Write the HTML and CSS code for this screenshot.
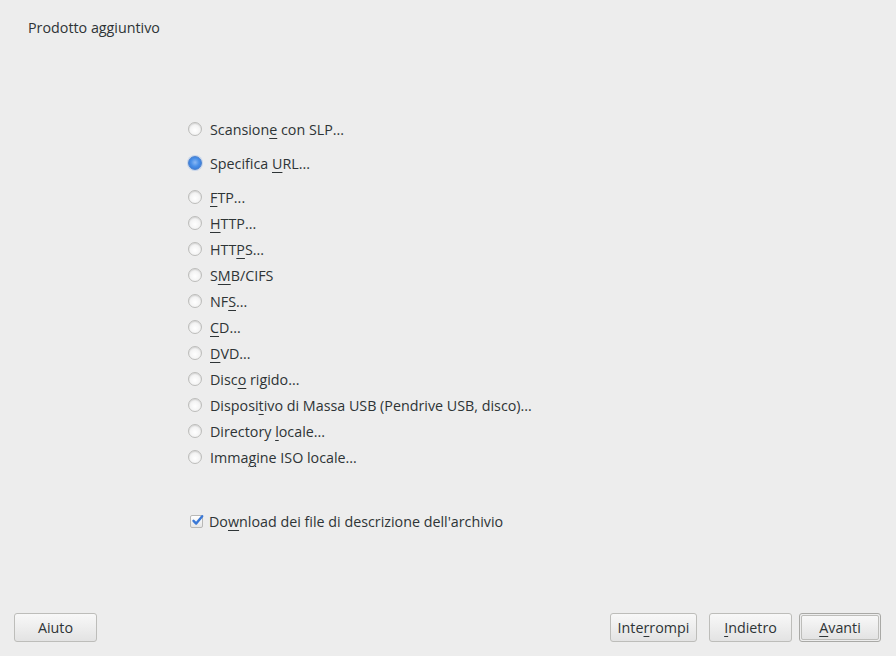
FILE: index.html
```html
<!DOCTYPE html>
<html lang="it">
<head>
<meta charset="utf-8">
<title>Prodotto aggiuntivo</title>
<link rel="stylesheet" href="styles.css">
</head>
<body>
<div class="window">
  <div class="title">Prodotto aggiuntivo</div>
  <div class="content">
    <div class="row gap"><span class="radio"></span><span>Scansion<u>e</u> con SLP...</span></div>
    <div class="row gap"><span class="radio checked"></span><span>Specifica <u>U</u>RL...</span></div>
    <div class="row"><span class="radio"></span><span><u>F</u>TP...</span></div>
    <div class="row"><span class="radio"></span><span><u>H</u>TTP...</span></div>
    <div class="row"><span class="radio"></span><span>HTT<u>P</u>S...</span></div>
    <div class="row"><span class="radio"></span><span>S<u>M</u>B/CIFS</span></div>
    <div class="row"><span class="radio"></span><span>NF<u>S</u>...</span></div>
    <div class="row"><span class="radio"></span><span><u>C</u>D...</span></div>
    <div class="row"><span class="radio"></span><span><u>D</u>VD...</span></div>
    <div class="row"><span class="radio"></span><span>Disc<u>o</u> rigido...</span></div>
    <div class="row"><span class="radio"></span><span>Disposi<u>t</u>ivo di Massa USB (Pendrive USB, disco)...</span></div>
    <div class="row"><span class="radio"></span><span>Directory <u>l</u>ocale...</span></div>
    <div class="row"><span class="radio"></span><span>Imma<u>g</u>ine ISO locale...</span></div>
    <div class="row check-row"><span class="checkbox"><svg viewBox="0 0 13 13" width="13" height="13"><path d="M2.5 6.8 L5.2 9.6 L11.2 2.2" fill="none" stroke="#3a78d6" stroke-width="2.4" stroke-linecap="round" stroke-linejoin="round"/></svg></span><span>Do<u>w</u>nload dei file di descrizione dell'archivio</span></div>
  </div>
  <div class="footer">
    <button class="btn btn-help">Aiuto</button>
    <div class="spacer"></div>
    <button class="btn btn-abort">Inte<u>r</u>rompi</button>
    <button class="btn btn-back"><u>I</u>ndietro</button>
    <span class="default-frame"><button class="btn btn-next"><u>A</u>vanti</button></span>
  </div>
</div>
</body>
</html>
```

FILE: styles.css
```css
html, body {
  margin: 0;
  padding: 0;
  background: #ededed;
}

.window {
  width: 896px;
  height: 656px;
  display: flex;
  flex-direction: column;
  box-sizing: border-box;
  font-family: "Open Sans", "Noto Sans", sans-serif;
  font-size: 14.3px;
  color: #2e3436;
}

.title {
  padding: 19px 28px 0;
  line-height: 18px;
}

.content {
  flex: 1;
  padding: 79px 0 0 188px;
  display: flex;
  flex-direction: column;
}

u {
  text-decoration: underline;
  text-underline-offset: 3px;
  text-decoration-thickness: 1px;
}

.row {
  height: 26px;
  display: flex;
  align-items: center;
  gap: 8px;
  white-space: nowrap;
}

.row.gap {
  margin-bottom: 8px;
}

.radio {
  width: 14px;
  height: 14px;
  box-sizing: border-box;
  border-radius: 50%;
  border: 1px solid #bdbdbb;
  background: radial-gradient(circle at 50% 60%, #ffffff 0%, #f4f4f4 50%, #d8d8d8 100%);
  box-shadow: inset 0 1px 1px rgba(0,0,0,0.08);
  flex: none;
}

.radio.checked {
  border-color: #4a82d0;
  background: radial-gradient(circle at 50% 45%, #8ab8f4 0%, #4a90e8 45%, #2e6fd0 100%);
  box-shadow: 0 0 0 1px rgba(130,170,230,0.35);
}

.check-row {
  margin-top: 38px;
  gap: 6px;
  padding-left: 2px;
}

.checkbox {
  width: 13px;
  height: 13px;
  box-sizing: border-box;
  border: 1px solid #b8b8b6;
  border-radius: 2px;
  background: linear-gradient(#ffffff, #e6e6e6);
  position: relative;
  flex: none;
}

.checkbox svg {
  position: absolute;
  left: 0;
  top: -2px;
}

.footer {
  display: flex;
  align-items: center;
  padding: 0 15px 14px 14px;
  gap: 12px;
}

.spacer {
  flex: 1;
}

.btn {
  font-family: inherit;
  font-size: 14.3px;
  color: #2e3436;
  height: 29px;
  box-sizing: border-box;
  border: 1px solid #bdbdba;
  border-radius: 3px;
  background: linear-gradient(#f8f8f8, #e3e3e3);
  padding: 0;
  line-height: 27px;
  text-align: center;
}

.btn-help { width: 83px; }
.btn-abort { width: 87px; }
.btn-back { width: 83px; margin-right: -5px; }

.default-frame {
  display: inline-flex;
  border: 1px solid #a9a9a6;
  border-radius: 3px;
  padding: 1px;
  height: 29px;
  box-sizing: border-box;
}

.btn-next {
  width: 78px;
  height: 25px;
  line-height: 23px;
  border-radius: 2px;
}
```
